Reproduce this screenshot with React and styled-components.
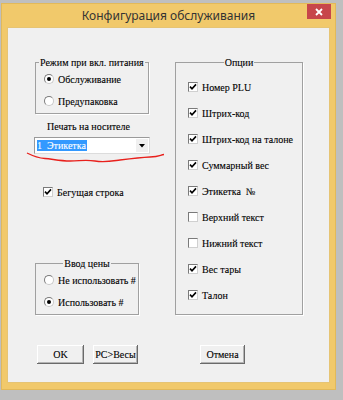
import React from "react";
import styled, { createGlobalStyle } from "styled-components";

const Global = createGlobalStyle`
  html, body { margin: 0; padding: 0; background: #bfbfbf; }
  body { width: 343px; height: 400px; overflow: hidden; }
`;

const Screen = styled.div`
  width: 343px;
  height: 400px;
  box-sizing: border-box;
  padding: 3px 0 0 1px;
  background: #bfbfbf;
`;

const Window = styled.div`
  width: 335px;
  height: 387px;
  box-sizing: border-box;
  background: #f1c96b;
  border: 1px solid #e2b95a;
  padding: 0 5px 6px 5px;
  display: flex;
  flex-direction: column;
`;

const TitleBar = styled.div`
  height: 23px;
  display: grid;
  grid-template-columns: 1fr auto 1fr;
  align-items: center;
`;

const Title = styled.div`
  grid-column: 2;
  font-family: "Noto Sans", "Open Sans", sans-serif;
  font-size: 12px;
  color: #333;
  white-space: nowrap;
`;

const Close = styled.div`
  justify-self: end;
  align-self: start;
  width: 24px;
  height: 15px;
  margin-right: -1px;
  background: #c7464a;
  display: flex;
  align-items: center;
  justify-content: center;
`;

const Content = styled.div`
  position: relative;
  flex: 1;
  box-sizing: border-box;
  background: #f0f0f0;
  border: 1px solid #e6c474;
  padding: 28px 0 0 26px;
  font-family: "Liberation Serif", "Times New Roman", serif;
  font-size: 10px;
  -webkit-text-stroke: 0.1px #000;
  color: #000;
  display: flex;
  flex-direction: column;
`;

const Columns = styled.div`
  display: grid;
  grid-template-columns: 116px 128px;
  column-gap: 25px;
  align-items: start;
`;

const LeftCol = styled.div`
  display: flex;
  flex-direction: column;
`;

const Group = styled.fieldset`
  margin: ${p => p.$mt || 0}px 0 0 ${p => p.$ml || 0}px;
  width: ${p => p.$w}px;
  min-inline-size: 0;
  box-sizing: border-box;
  padding: ${p => p.$pad};
  border: 1px solid #a0a0a0;
  box-shadow: 1px 1px 0 #fff;
  display: flex;
  flex-direction: column;
  gap: ${p => p.$gap || 0}px;
`;

const Legend = styled.legend`
  padding: 0 1px;
  line-height: 13px;
  margin: ${p => (p.$center ? "0 auto" : "0 0 0 3px")};
  white-space: nowrap;
`;

const Row = styled.div`
  height: ${p => p.$h}px;
  display: flex;
  align-items: center;
  gap: 4px;
  padding-left: ${p => p.$pl || 0}px;
  margin-top: ${p => p.$mt || 0}px;
  white-space: pre;
  line-height: 13px;
`;

const Circle = styled.span`
  flex: none;
  width: 10px;
  height: 10px;
  box-sizing: border-box;
  border-radius: 50%;
  background: #fff;
  border: 1px solid;
  border-color: #7a7a7a #c8c8c8 #c8c8c8 #7a7a7a;
  display: flex;
  align-items: center;
  justify-content: center;
  &::after {
    content: "";
    display: ${p => (p.$on ? "block" : "none")};
    width: 4px;
    height: 4px;
    border-radius: 50%;
    background: #000;
  }
`;

const Box = styled.span`
  flex: none;
  width: 10px;
  height: 10px;
  box-sizing: border-box;
  background: #fff;
  border: 1px solid;
  border-color: #7a7a7a #d0d0d0 #d0d0d0 #7a7a7a;
  display: flex;
  align-items: center;
  justify-content: center;
`;

const Label = styled.div`
  margin-top: 6px;
  padding-left: 13px;
  line-height: 13px;
  white-space: nowrap;
`;

const Select = styled.div`
  margin-top: 4px;
  width: 116px;
  height: 17px;
  box-sizing: border-box;
  background: #fff;
  border: 1px solid;
  border-color: #9a9a9a #dcdcdc #dcdcdc #9a9a9a;
  padding: 0 1px 0 2px;
  display: flex;
  align-items: center;
`;

const Selected = styled.span`
  background: #3399ff;
  color: #fff;
  -webkit-text-stroke: 0.1px #fff;
  height: 11px;
  line-height: 11px;
  padding-right: 1px;
  white-space: pre;
`;

const Arrow = styled.span`
  margin-left: auto;
  width: 12px;
  height: 13px;
  background: #f0f0f0;
  display: flex;
  align-items: center;
  justify-content: center;
`;

const Buttons = styled.div`
  margin-top: 30px;
  padding-left: 3px;
  display: flex;
`;

const Button = styled.button`
  width: ${p => p.$w}px;
  height: 19px;
  margin-left: ${p => p.$ml || 0}px;
  padding: 0;
  font: inherit;
  color: #000;
  background: #f0f0f0;
  border: none;
  box-shadow: inset -1px -1px 0 #6a6a6a, inset 1px 1px 0 #fff, inset -2px -2px 0 #b4b4b4;
`;

const Scribble = styled.svg`
  position: absolute;
  left: 0;
  top: 0;
  pointer-events: none;
`;

function Tick() {
  return (
    <svg width="8" height="8" viewBox="0 0 8 8">
      <path d="M1 3.6 L3 5.8 L7 1.4" fill="none" stroke="#000" strokeWidth="1.6" />
    </svg>
  );
}

function Radio({ on, children }) {
  return (
    <Row $h={20} $pl={8}>
      <Circle $on={on} />
      <span>{children}</span>
    </Row>
  );
}

function Check({ on, children, h = 26, pl = 12, mt }) {
  return (
    <Row $h={h} $pl={pl} $mt={mt}>
      <Box>{on && <Tick />}</Box>
      <span>{children}</span>
    </Row>
  );
}

const options = [
  ["Номер PLU", true],
  ["Штрих-код", true],
  ["Штрих-код на талоне", true],
  ["Суммарный вес", true],
  ["Этикетка  №", true],
  ["Верхний текст", false],
  ["Нижний текст", false],
  ["Вес тары", true],
  ["Талон", true],
];

export default function App() {
  return (
    <Screen>
      <Global />
      <Window>
        <TitleBar>
          <Title>Конфигурация обслуживания</Title>
          <Close>
            <svg width="8" height="8" viewBox="0 0 8 8">
              <path d="M1 1 L7 7 M7 1 L1 7" stroke="#fff" strokeWidth="1.8" />
            </svg>
          </Close>
        </TitleBar>
        <Content>
          <Columns>
            <LeftCol>
              <Group $w={114} $ml={1} $pad="0 0 2px 0" $gap={2}>
                <Legend>Режим при вкл. питания</Legend>
                <Radio on>Обслуживание</Radio>
                <Radio>Предупаковка</Radio>
              </Group>
              <Label>Печать на носителе</Label>
              <Select>
                <Selected>1  Этикетка</Selected>
                <Arrow>
                  <svg width="6" height="4" viewBox="0 0 6 4">
                    <path d="M0 0 H6 L3 3.5 Z" fill="#000" />
                  </svg>
                </Arrow>
              </Select>
              <Check on h={14} pl={9} mt={31}>Бегущая строка</Check>
              <Group $w={104} $ml={1} $mt={58} $pad="0 0 2px 0" $gap={2}>
                <Legend $center>Ввод цены</Legend>
                <Radio>Не использовать #</Radio>
                <Radio on>Использовать #</Radio>
              </Group>
            </LeftCol>
            <Group $w={128} $pad="5px 0 6px 0">
              <Legend $center>Опции</Legend>
              {options.map(([text, on]) => (
                <Check key={text} on={on}>{text}</Check>
              ))}
            </Group>
          </Columns>
          <Buttons>
            <Button $w={47}>OK</Button>
            <Button $w={45} $ml={9}>PC&gt;Весы</Button>
            <Button $w={45} $ml={62}>Отмена</Button>
          </Buttons>
          <Scribble width="323" height="356" viewBox="8 28 323 356">
            <path
              d="M27 153 C33 156 38 158 45 158.5 S60 161 70 161 S85 159.5 95 161 S112 161 120 160 S140 157.5 150 157 S160 155 164 154.5"
              fill="none"
              stroke="#e8201c"
              strokeWidth="1.3"
            />
          </Scribble>
        </Content>
      </Window>
    </Screen>
  );
}
